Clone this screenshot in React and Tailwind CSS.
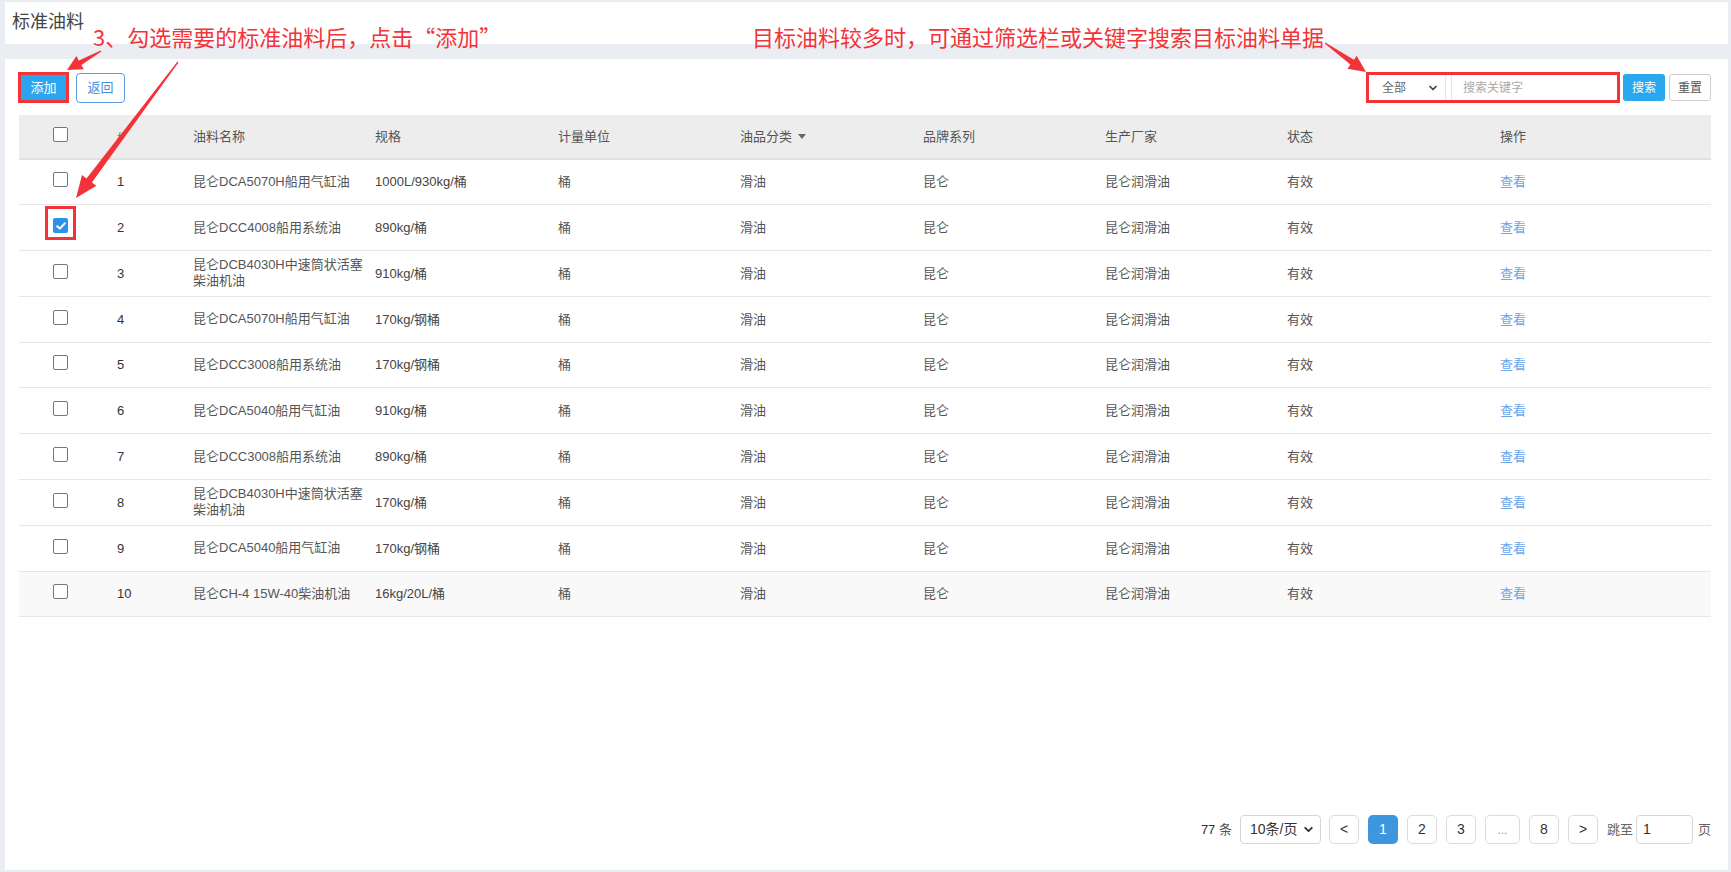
import { ChevronDown } from 'lucide-react'

const rows = [
  { id: 1, name: ['昆仑DCA5070H船用气缸油'], spec: '1000L/930kg/桶' },
  { id: 2, name: ['昆仑DCC4008船用系统油'], spec: '890kg/桶', checked: true },
  { id: 3, name: ['昆仑DCB4030H中速筒状活塞', '柴油机油'], spec: '910kg/桶' },
  { id: 4, name: ['昆仑DCA5070H船用气缸油'], spec: '170kg/钢桶' },
  { id: 5, name: ['昆仑DCC3008船用系统油'], spec: '170kg/钢桶' },
  { id: 6, name: ['昆仑DCA5040船用气缸油'], spec: '910kg/桶' },
  { id: 7, name: ['昆仑DCC3008船用系统油'], spec: '890kg/桶' },
  { id: 8, name: ['昆仑DCB4030H中速筒状活塞', '柴油机油'], spec: '170kg/桶' },
  { id: 9, name: ['昆仑DCA5040船用气缸油'], spec: '170kg/钢桶' },
  { id: 10, name: ['昆仑CH-4 15W-40柴油机油'], spec: '16kg/20L/桶', hover: true },
]

const cols = [90, 76, 182, 183, 182, 183, 182, 182, 213, 219]

// tapered annotation arrow, tail -> tip
function arrow(x1, y1, x2, y2, head, hw, sw) {
  const len = Math.hypot(x2 - x1, y2 - y1)
  const ux = (x2 - x1) / len
  const uy = (y2 - y1) / len
  const nx = -uy
  const ny = ux
  const bx = x2 - ux * head
  const by = y2 - uy * head
  const p = [
    [x1 + nx * 0.6, y1 + ny * 0.6],
    [bx + nx * sw, by + ny * sw],
    [bx + nx * hw, by + ny * hw],
    [x2, y2],
    [bx - nx * hw, by - ny * hw],
    [bx - nx * sw, by - ny * sw],
    [x1 - nx * 0.6, y1 - ny * 0.6],
  ]
  return p.map(([a, b]) => `${a.toFixed(1)},${b.toFixed(1)}`).join(' ')
}

function Checkbox({ checked }) {
  if (checked) {
    return (
      <span className="inline-flex w-[15px] h-[15px] rounded-[2px] bg-[#2b93ee] items-center justify-center align-middle">
        <svg width="10" height="8" viewBox="0 0 10 8">
          <path d="M1.2 4.2 L3.8 6.6 L8.8 1.4" fill="none" stroke="#fff" strokeWidth="2" strokeLinecap="round" strokeLinejoin="round" />
        </svg>
      </span>
    )
  }
  return <span className="inline-block w-[15px] h-[15px] rounded-[2px] border border-[#767676] bg-white align-middle" />
}

function PageBtn({ children, active, wide }) {
  return (
    <div
      className={`h-[29px] ${wide ? 'w-[35px]' : 'w-[30px]'} rounded-[5px] flex items-center justify-center text-[14px] ${
        active ? 'bg-[#3e96de] text-white' : 'bg-white border border-[#dcdcdc] text-[#333]'
      }`}
    >
      {children}
    </div>
  )
}

export default function App() {
  return (
    <div
      className="relative w-[1731px] h-[872px] bg-[#eaedf1] overflow-hidden text-[#444]"
      style={{ fontFamily: '"Liberation Sans", "Noto Sans CJK SC", sans-serif' }}
    >
      {/* Title bar */}
      <div className="ml-[5px] mr-[3px] mt-[2px] h-[42px] bg-white pl-[7px] flex items-center">
        <span className="text-[18px] text-[#444] leading-none -mt-[3px]">标准油料</span>
      </div>

      {/* Main panel */}
      <div className="ml-[5px] mr-[3px] mt-[15px] h-[811px] bg-white flex flex-col">
        {/* Toolbar */}
        <div className="mt-[13px] pl-[13px] pr-[17px] h-[31px] flex items-center justify-between">
          <div className="flex items-center">
            <div className="w-[51px] h-[31px] border-[3px] border-[#f2343a] bg-[#2ba5ee] flex items-center justify-center text-white text-[13px]">
              添加
            </div>
            <div className="ml-[7px] w-[49px] h-[30px] rounded-[4px] border border-[#5b9bdd] text-[#4a8fd8] text-[13px] flex items-center justify-center">
              返回
            </div>
          </div>
          <div className="flex items-center">
            <div className="w-[254px] h-[31px] border-[3px] border-[#f2343a] flex items-stretch">
              <div className="w-[77px] border-r border-[#e6e6e6] flex items-center justify-between pl-[13px] pr-[6px] text-[12px] text-[#666]">
                <span>全部</span>
                <ChevronDown size={12} strokeWidth={3.5} className="text-[#444]" />
              </div>
              <div className="ml-[5px] flex-1 border-l border-[#e6e6e6] flex items-center pl-[11px] text-[12px] text-[#aaa]">
                搜索关键字
              </div>
            </div>
            <div className="ml-[3px] w-[42px] h-[27px] rounded-[3px] bg-[#29a8ee] text-white text-[12px] flex items-center justify-center">
              搜索
            </div>
            <div className="ml-[4px] w-[42px] h-[27px] rounded-[3px] border border-[#cfcfcf] text-[#555] text-[12px] flex items-center justify-center">
              重置
            </div>
          </div>
        </div>

        {/* Table */}
        <div className="mt-[12px] ml-[14px] w-[1692px]">
          <table className="table-fixed w-[1692px] border-collapse text-[13px]">
            <colgroup>
              {cols.map((w, i) => (
                <col key={i} style={{ width: w }} />
              ))}
            </colgroup>
            <thead>
              <tr className="h-[44px] bg-[#ededed] border-b-2 border-[#e0e0e0] text-[#555]">
                <th className="pl-[34px] text-left font-normal">
                  <span className="relative -top-[3px]">
                    <Checkbox />
                  </span>
                </th>
                <th className="pl-[8px] text-left font-normal">#</th>
                <th className="pl-[8px] text-left font-normal">油料名称</th>
                <th className="pl-[8px] text-left font-normal">规格</th>
                <th className="pl-[8px] text-left font-normal">计量单位</th>
                <th className="pl-[8px] text-left font-normal">
                  <span className="inline-flex items-center gap-[6px]">
                    油品分类
                    <svg width="8" height="5" viewBox="0 0 8 5">
                      <path d="M0 0 H8 L4 5 Z" fill="#666" />
                    </svg>
                  </span>
                </th>
                <th className="pl-[8px] text-left font-normal">品牌系列</th>
                <th className="pl-[8px] text-left font-normal">生产厂家</th>
                <th className="pl-[8px] text-left font-normal">状态</th>
                <th className="pl-[8px] text-left font-normal">操作</th>
              </tr>
            </thead>
            <tbody>
              {rows.map(r => (
                <tr key={r.id} className={`h-[45.8px] border-b border-[#e6e6e6] ${r.hover ? 'bg-[#f9f9f9]' : ''}`}>
                  <td className="pl-[34px]">
                    <span className="relative -top-[3px]">
                      <Checkbox checked={r.checked} />
                    </span>
                  </td>
                  <td className="pl-[8px] text-[#333]">{r.id}</td>
                  <td className="pl-[8px] leading-[16px] text-[#555]">
                    {r.name.map((l, i) => (
                      <div key={i}>{l}</div>
                    ))}
                  </td>
                  <td className="pl-[8px] text-[#444]">{r.spec}</td>
                  <td className="pl-[8px] text-[#555]">桶</td>
                  <td className="pl-[8px] text-[#555]">滑油</td>
                  <td className="pl-[8px] text-[#555]">昆仑</td>
                  <td className="pl-[8px] text-[#555]">昆仑润滑油</td>
                  <td className="pl-[8px] text-[#555]">有效</td>
                  <td className="pl-[8px] text-[#6aa7ec]">查看</td>
                </tr>
              ))}
            </tbody>
          </table>
        </div>

        {/* Pagination */}
        <div className="mt-auto mb-[26px] pr-[17px] flex items-center justify-end text-[13px] text-[#555]">
          <span className="mr-[8px]">
            <span className="text-[#333]">77</span> 条
          </span>
          <div className="w-[81px] h-[29px] rounded-[4px] border border-[#d6d6d6] flex items-center justify-between pl-[9px] pr-[5px] text-[14px] text-[#333]">
            <span>10条/页</span>
            <ChevronDown size={13} strokeWidth={3.5} className="text-[#333]" />
          </div>
          <div className="ml-[8px] flex items-center gap-[9px]">
            <PageBtn>&lt;</PageBtn>
            <PageBtn active>1</PageBtn>
            <PageBtn>2</PageBtn>
            <PageBtn>3</PageBtn>
            <PageBtn wide>
              <span className="text-[#999] text-[12px]">...</span>
            </PageBtn>
            <PageBtn>8</PageBtn>
            <PageBtn>&gt;</PageBtn>
          </div>
          <span className="ml-[9px] text-[13px] text-[#666]">跳至</span>
          <div className="ml-[3px] w-[57px] h-[29px] rounded-[4px] border border-[#d6d6d6] flex items-center pl-[6px] text-[14px] text-[#333]">
            1
          </div>
          <span className="ml-[5px] text-[13px] text-[#666]">页</span>
        </div>
      </div>

      {/* Annotations */}
      <div
        className="absolute left-[93px] top-[24px] text-[22px] leading-[24px] text-[#f2343a] whitespace-nowrap"
        style={{ fontFamily: '"Noto Sans CJK SC", sans-serif' }}
      >
        3、勾选需要的标准油料后，点击“添加”
      </div>
      <div
        className="absolute left-[752px] top-[24px] text-[22px] leading-[24px] text-[#f2343a] whitespace-nowrap"
        style={{ fontFamily: '"Noto Sans CJK SC", sans-serif' }}
      >
        目标油料较多时，可通过筛选栏或关键字搜索目标油料单据
      </div>
      <div className="absolute left-[45px] top-[206px] w-[31px] h-[34px] border-[3px] border-[#f2343a]" />

      <svg className="absolute left-0 top-0 pointer-events-none" width="1731" height="872">
        <polygon points={arrow(101, 51, 67, 70, 15, 7.5, 2.6)} fill="#f2343a" />
        <polygon points={arrow(178, 62, 76, 198, 22, 9, 3.4)} fill="#f2343a" />
        <polygon points={arrow(1325, 43, 1366, 72, 17, 8, 3)} fill="#f2343a" />
      </svg>
    </div>
  )
}
